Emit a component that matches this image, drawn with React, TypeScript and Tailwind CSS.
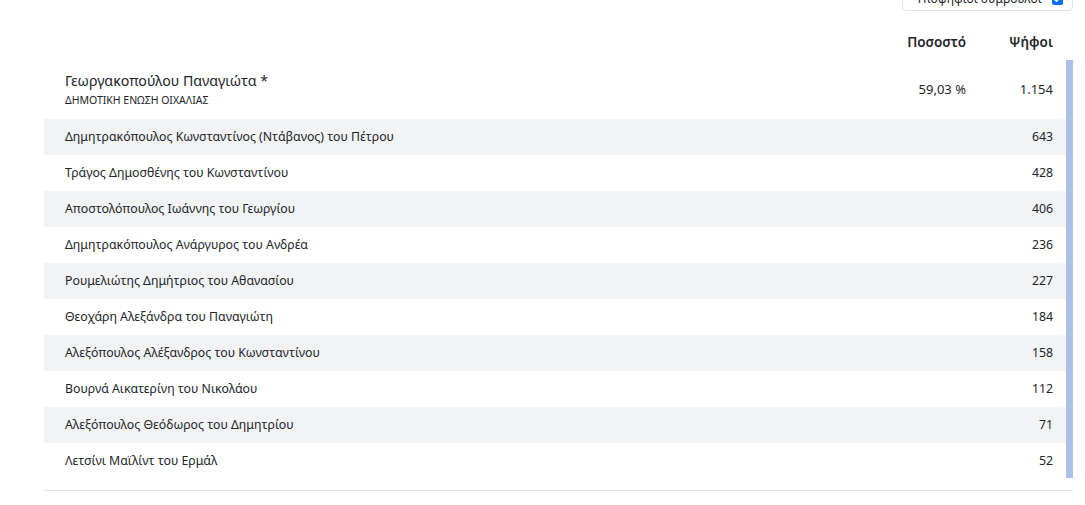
const candidates: [string, string][] = [
  ["Δημητρακόπουλος Κωνσταντίνος (Ντάβανος) του Πέτρου", "643"],
  ["Τράγος Δημοσθένης του Κωνσταντίνου", "428"],
  ["Αποστολόπουλος Ιωάννης του Γεωργίου", "406"],
  ["Δημητρακόπουλος Ανάργυρος του Ανδρέα", "236"],
  ["Ρουμελιώτης Δημήτριος του Αθανασίου", "227"],
  ["Θεοχάρη Αλεξάνδρα του Παναγιώτη", "184"],
  ["Αλεξόπουλος Αλέξανδρος του Κωνσταντίνου", "158"],
  ["Βουρνά Αικατερίνη του Νικολάου", "112"],
  ["Αλεξόπουλος Θεόδωρος του Δημητρίου", "71"],
  ["Λετσίνι Μαϊλίντ του Ερμάλ", "52"],
];

export default function App() {
  return (
    <div className="w-[1085px] h-[505px] bg-white overflow-hidden text-[#212529] font-['Noto_Sans',sans-serif]">
      <div className="ml-[44px] w-[1029px]">
        {/* filter toggle, scrolled partly out of view */}
        <div className="flex justify-end -mt-[13px]">
          <label className="flex items-center gap-[10px] h-[24px] w-[171px] pl-[13px] pr-[12px] border border-[#dee2e6] rounded-[4px] text-[12px] whitespace-nowrap">
            <span className="flex-1">Υποψήφιοι σύμβουλοι</span>
            <span className="w-[11px] h-[11px] shrink-0 rounded-[2px] bg-[#0d6efd] flex items-center justify-center">
              <svg viewBox="0 0 12 12" className="w-[9px] h-[9px]">
                <path d="M2.5 6.2l2.3 2.3 4.7-5" fill="none" stroke="white" strokeWidth="1.8" strokeLinecap="round" strokeLinejoin="round" />
              </svg>
            </span>
          </label>
        </div>

        {/* header */}
        <div className="flex items-end h-[49px] pb-[8px] pr-[7px] text-[13.5px] font-semibold">
          <div className="flex-1" />
          <div className="w-[100px] text-right">Ποσοστό</div>
          <div className="w-[100px] text-right pr-[13px]">Ψήφοι</div>
        </div>

        {/* body with scrollbar */}
        <div className="flex">
          <div className="flex-1">
            <div className="flex items-center h-[59px] pl-[21px]">
              <div className="flex-1">
                <div className="text-[14.2px] leading-[18px]">Γεωργακοπούλου Παναγιώτα *</div>
                <div className="text-[10.5px] leading-[14px] mt-[3px] uppercase">ΔΗΜΟΤΙΚΗ ΕΝΩΣΗ ΟΙΧΑΛΙΑΣ</div>
              </div>
              <div className="w-[100px] text-right text-[13px]">59,03 %</div>
              <div className="w-[100px] text-right pr-[13px] text-[13px]">1.154</div>
            </div>
            {candidates.map(([name, votes], i) => (
              <div
                key={name}
                className={`flex items-center h-[36px] pl-[21px] text-[12.3px] ${i % 2 === 0 ? "bg-[#f2f3f5]" : "bg-white"}`}
              >
                <div className="flex-1">{name}</div>
                <div className="w-[100px] text-right pr-[13px]">{votes}</div>
              </div>
            ))}
          </div>
          <div className="w-[7px] mb-[1px] bg-[#a9c1e6]" />
        </div>

        <div className="mt-[11px] border-t border-[#dee2e6]" />
      </div>
    </div>
  );
}
